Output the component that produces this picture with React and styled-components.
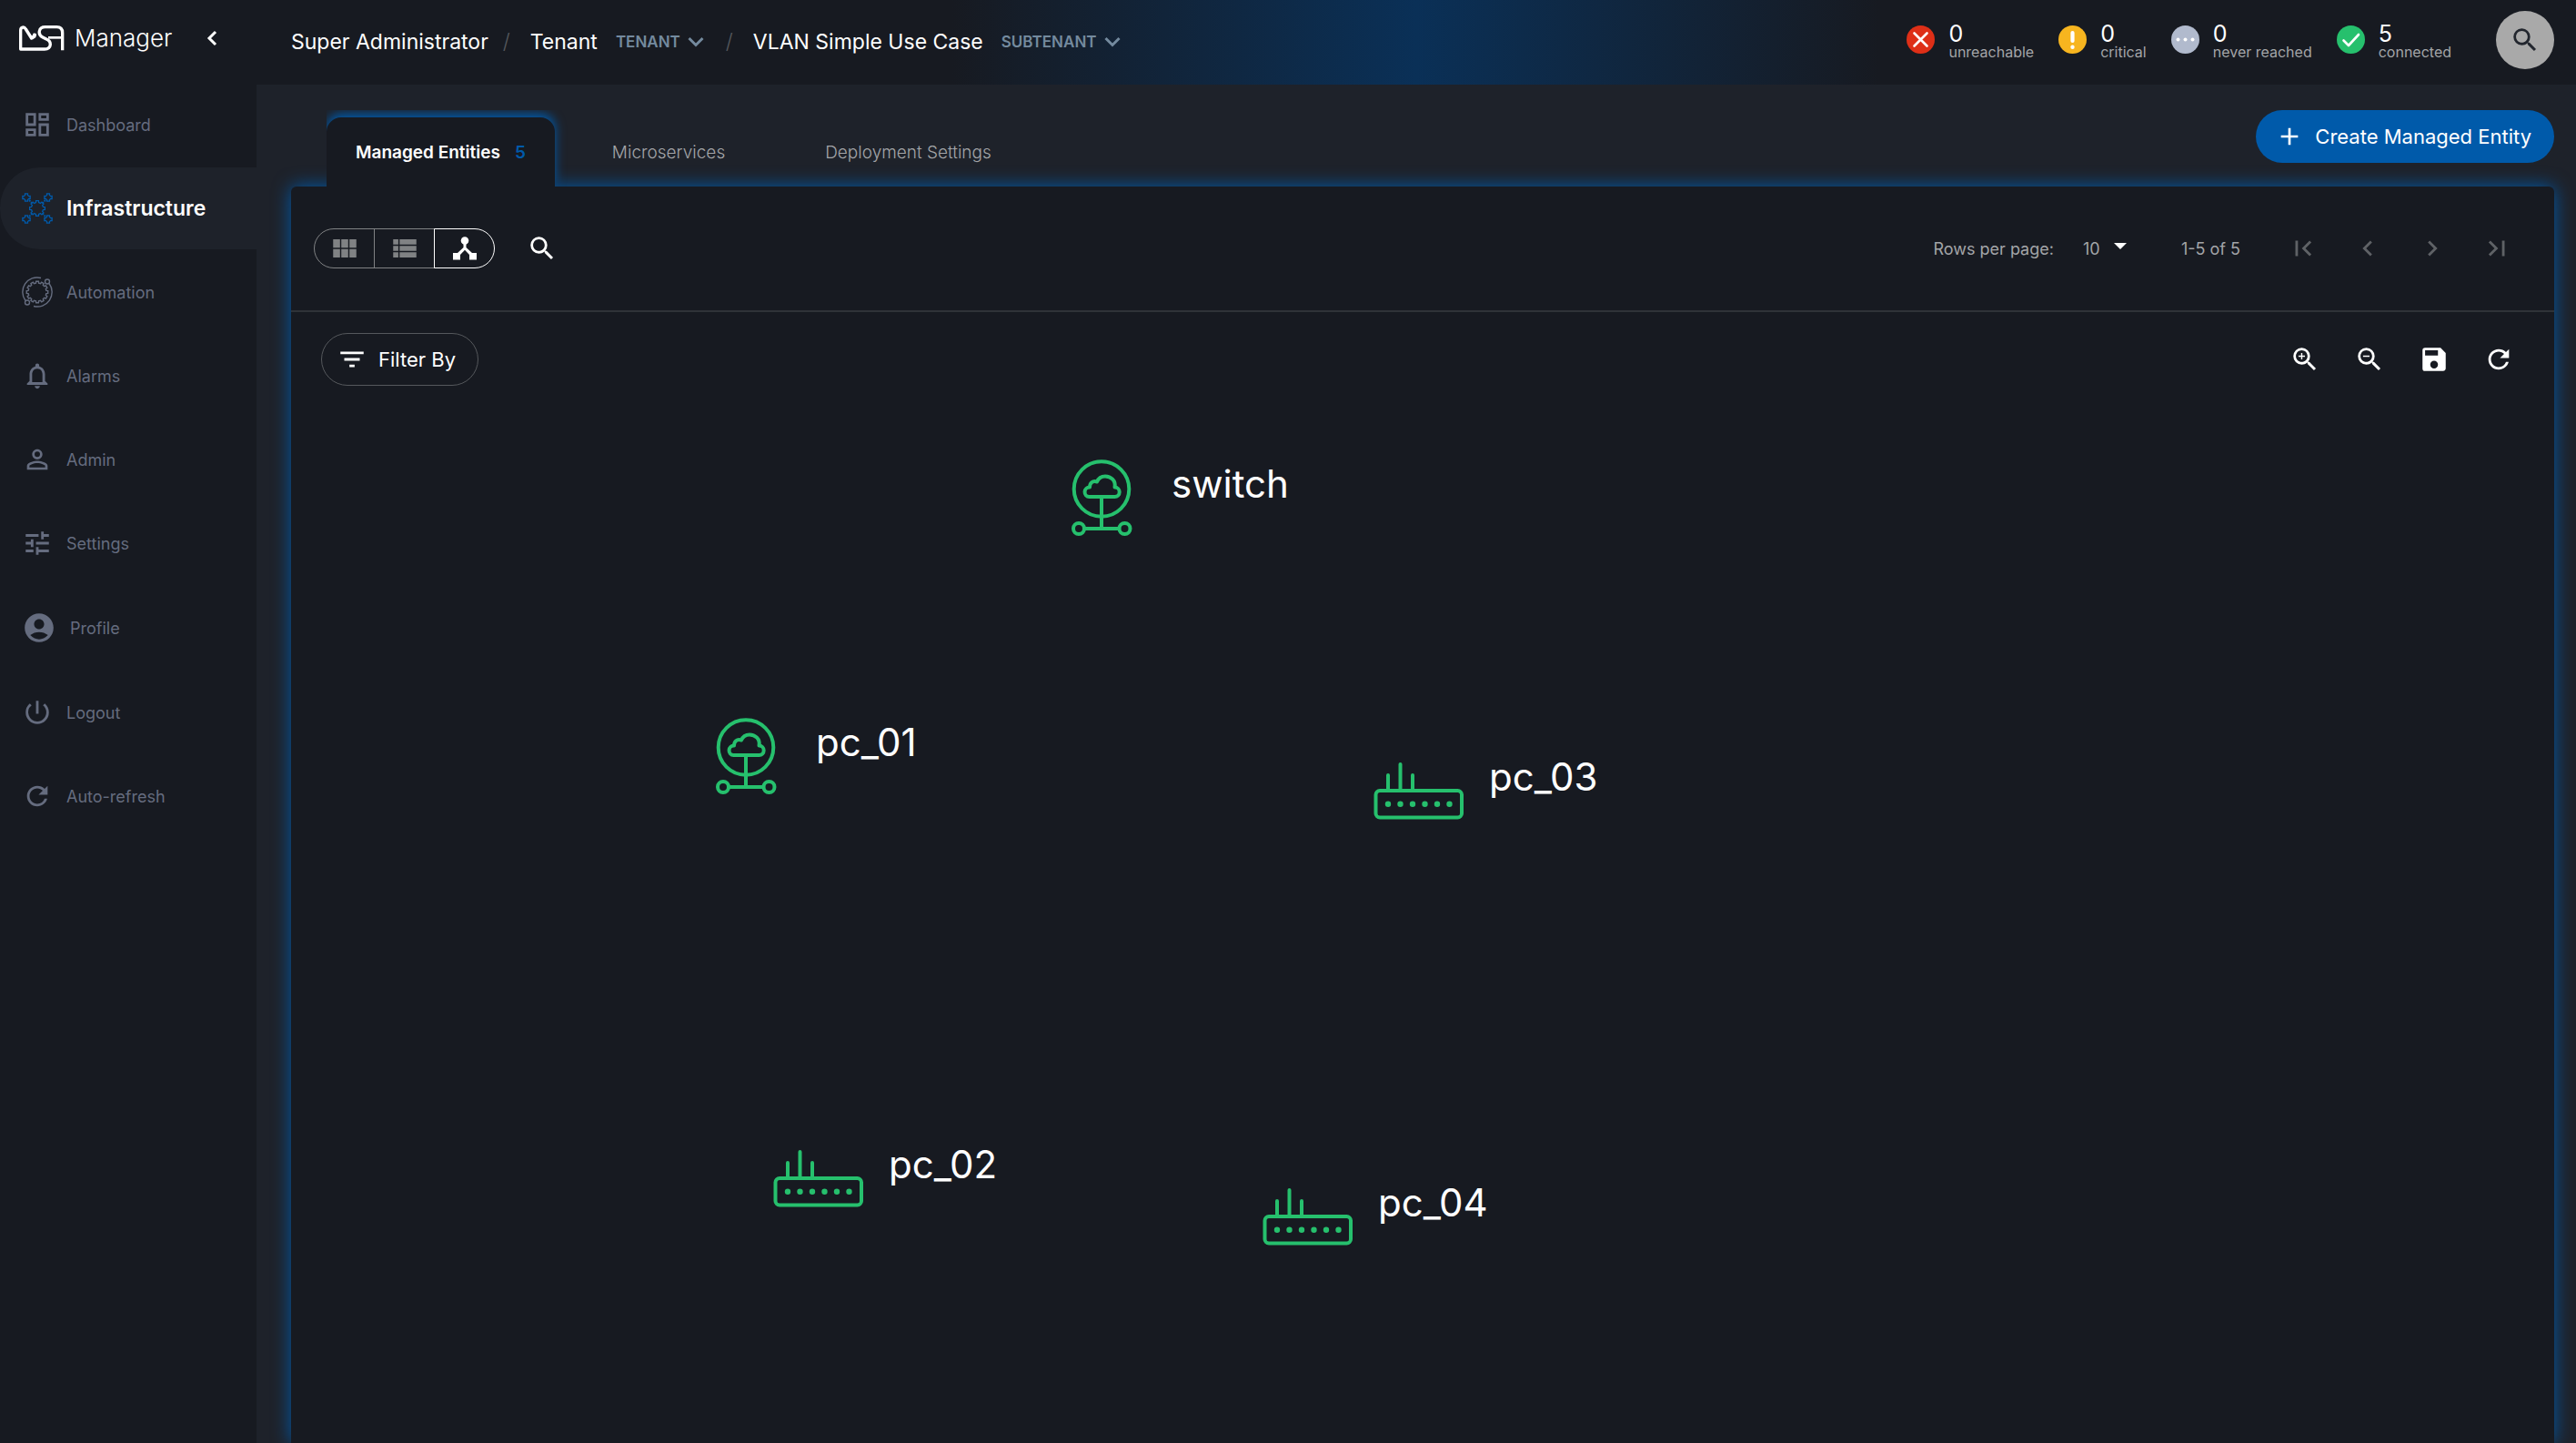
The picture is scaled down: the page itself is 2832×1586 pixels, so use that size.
import React from "react";
import styled, { createGlobalStyle, css } from "styled-components";
import {
  MdOutlineDashboard,
  MdNotificationsNone,
  MdPersonOutline,
  MdTune,
  MdAccountCircle,
  MdPowerSettingsNew,
  MdRefresh,
  MdSearch,
  MdViewModule,
  MdViewList,
  MdZoomIn,
  MdZoomOut,
  MdSave,
  MdFirstPage,
  MdChevronLeft,
  MdChevronRight,
  MdLastPage,
  MdFilterList,
  MdAdd,
} from "react-icons/md";

const color = {
  dark: "#171a21",
  base: "#1e222a",
  blue: "#005aaa",
  green: "#26c06d",
  nav: "#656c7f",
  muted: "#a3a5a8",
  tag: "#748a9e",
  line: "#2f3338",
};

const GlobalStyle = createGlobalStyle`
  *, *::before, *::after { box-sizing: border-box; }
  body {
    margin: 0;
    background: ${color.base};
    color: #fff;
    font-family: Inter, "Liberation Sans", sans-serif;
    font-size: 18px;
  }
  button, select {
    margin: 0;
    padding: 0;
    border: 0;
    background: none;
    color: inherit;
    font: inherit;
    cursor: pointer;
  }
  svg { display: block; flex: none; }
  a { color: inherit; text-decoration: none; }
`;

/* ---------- layout ---------- */

const Shell = styled.div`
  display: grid;
  grid-template-columns: 282px minmax(0, 1fr);
  height: 100vh;
  overflow: hidden;
`;

const Sidebar = styled.aside`
  background: ${color.dark};
`;

const Main = styled.div`
  display: flex;
  flex-direction: column;
  min-width: 0;
`;

const Brand = styled.div`
  display: flex;
  align-items: center;
  height: 92px;
  padding: 0 43px 8px 21px;
`;

const BrandName = styled.span`
  flex: 1;
  margin-left: 11px;
  font-size: 26px;
  font-weight: 300;
  line-height: 32px;
`;

const Nav = styled.nav`
  display: flex;
  flex-direction: column;
  gap: 2px;
`;

const NavItem = styled.a`
  display: flex;
  align-items: center;
  gap: 15px;
  height: ${(p) => (p.$tall ? 92 : 90)}px;
  padding-left: 24px;
  border-radius: 44px 0 0 44px;
  color: ${color.nav};
  font-size: 18px;

  ${(p) =>
    p.$active &&
    css`
      background: ${color.base};
      color: #fff;
      font-size: 23px;
      font-weight: 600;
      svg { color: ${color.blue}; }
    `}
`;

/* ---------- header ---------- */

const Header = styled.header`
  display: flex;
  align-items: center;
  justify-content: space-between;
  height: 93px;
  padding: 0 24px 6px 38px;
  background: linear-gradient(90deg, ${color.dark} 30%, #0a3057 50%, ${color.dark} 70%);
`;

const Crumbs = styled.nav`
  display: flex;
  align-items: center;
  padding-top: 4px;
  font-size: 23px;
`;

const Slash = styled.span`
  margin: 0 22px 0 16px;
  color: #55585d;
  font-weight: 300;
`;

const LevelButton = styled.button`
  display: flex;
  align-items: center;
  gap: 8px;
  margin-left: 20px;
  color: ${color.tag};
  font-size: 17px;
  font-weight: 600;

  & + ${Slash} { margin-left: 24px; }
`;

const Stats = styled.div`
  display: flex;
  align-items: center;
  gap: 27px;
`;

const Stat = styled.div`
  display: flex;
  align-items: center;
  gap: 15px;
`;

const StatText = styled.div`
  display: flex;
  flex-direction: column;
  padding-top: 4px;
`;

const StatValue = styled.span`
  font-size: 25px;
  line-height: 22px;
`;

const StatLabel = styled.span`
  color: ${color.muted};
  font-size: 16px;
  line-height: 18px;
`;

const RoundSearch = styled.button`
  display: grid;
  place-items: center;
  width: 64px;
  height: 64px;
  margin-left: 22px;
  border-radius: 50%;
  background: #a9a9a9;
  color: #22262e;
`;

/* ---------- tabs and panel ---------- */

const TopBar = styled.div`
  display: flex;
  align-items: flex-start;
  justify-content: space-between;
  padding: 28px 24px 0 77px;
  position: relative;
  z-index: 1;
`;

const Tabs = styled.div`
  display: flex;
  gap: 16px;
  padding: 8px 8px 0 0;
  overflow: hidden;
`;

const Tab = styled.button`
  display: flex;
  align-items: center;
  gap: 16px;
  height: 76px;
  padding: 0 47px;
  color: ${color.muted};
  font-size: 19px;
  font-weight: 300;

  ${(p) =>
    p.$active &&
    css`
      padding: 0 32px;
      border-radius: 16px 16px 0 0;
      background: ${color.dark};
      box-shadow: 0 -4px 12px ${color.blue};
      color: #fff;
      font-weight: 600;
    `}
`;

const Count = styled.span`
  color: ${color.blue};
`;

const CreateButton = styled.button`
  display: flex;
  align-items: center;
  gap: 12px;
  height: 58px;
  padding: 0 25px 0 21px;
  border-radius: 29px;
  background: ${color.blue};
  font-size: 22px;
`;

const Panel = styled.section`
  display: flex;
  flex: 1;
  flex-direction: column;
  margin: 0 24px 0 38px;
  border-radius: 6px 6px 0 0;
  background: ${color.dark};
  box-shadow: 0 0 20px ${color.blue};
`;

const Toolbar = styled.div`
  display: flex;
  align-items: center;
  justify-content: space-between;
  height: 138px;
  padding: 0 46px 0 25px;
  border-bottom: 2px solid ${color.line};
`;

const Group = styled.div`
  display: flex;
  align-items: center;
`;

const ViewButton = styled.button`
  display: grid;
  place-items: center;
  width: 67px;
  height: 44px;
  margin-right: -1px;
  border: 1px solid #808284;
  color: #808284;

  &:first-child { border-radius: 22px 0 0 22px; }
  &:last-of-type { border-radius: 0 22px 22px 0; }

  ${(p) =>
    p.$active &&
    css`
      border-color: #fff;
      color: #fff;
      z-index: 1;
    `}
`;

const IconButton = styled.button`
  display: grid;
  place-items: center;
  color: ${(p) => (p.disabled ? "#5f6266" : "#fff")};
`;

const SearchSlot = styled.div`
  margin-left: 36px;
`;

const IconRow = styled.div`
  display: flex;
  align-items: center;
  gap: 37px;
`;

const Paging = styled.div`
  display: flex;
  align-items: center;
  color: ${color.muted};
  font-size: 18px;
`;

const SelectWrap = styled.div`
  display: flex;
  align-items: center;
  margin: 0 60px 0 32px;
`;

const RowsSelect = styled.select`
  appearance: none;
  width: 48px;
  background: url("data:image/svg+xml,%3Csvg xmlns='http://www.w3.org/2000/svg' width='14' height='7'%3E%3Cpath d='M0 0h14L7 7z' fill='white'/%3E%3C/svg%3E")
    no-repeat right 35%;
`;

const Range = styled.span`
  margin-right: 52px;
`;

const Canvas = styled.div`
  position: relative;
  flex: 1;
`;

const CanvasBar = styled.div`
  display: flex;
  align-items: center;
  justify-content: space-between;
  padding: 23px 44px 0 33px;
`;

const FilterButton = styled.button`
  display: flex;
  align-items: center;
  gap: 12px;
  height: 58px;
  padding: 0 24px 0 16px;
  border: 1px solid #55585c;
  border-radius: 29px;
  font-size: 22px;
`;

const Node = styled.div`
  position: absolute;
  left: ${(p) => p.$x}px;
  top: ${(p) => p.$y}px;
  display: flex;
  align-items: center;
  gap: 27px;
`;

const NodeLabel = styled.span`
  padding-bottom: 30px;
  font-size: 42px;
  line-height: 48px;
`;

/* ---------- drawings ---------- */

function gear(cx, cy, outer, inner, teeth) {
  const points = [];
  const step = (Math.PI * 2) / teeth;
  for (let i = 0; i < teeth; i += 1) {
    const a = i * step - Math.PI / 2;
    [
      [-0.22, outer],
      [0.22, outer],
      [0.3, inner],
      [0.7, inner],
    ].forEach(([t, r]) => {
      points.push(
        `${(cx + r * Math.cos(a + t * step)).toFixed(2)} ${(cy + r * Math.sin(a + t * step)).toFixed(2)}`
      );
    });
  }
  return `M${points.join("L")}Z`;
}

const Logo = () => (
  <svg width="50" height="28" viewBox="0 0 150 84" fill="none" stroke="#fff" strokeWidth="10" strokeLinejoin="round" aria-hidden="true">
    <path d="M51 26V36L41 42L22 12C17 3 5 4 5 16V78H84C108 78 108 52 90 45L78 39C60 30 64 5 86 5H124C138 5 143 12 143 24V82" />
    <path d="M42 43L54 28" />
    <path d="M96 40H143" strokeWidth="8" />
  </svg>
);

const CollapseIcon = () => (
  <svg width="12" height="18" viewBox="0 0 12 18" fill="none" stroke="#fff" strokeWidth="3" aria-hidden="true">
    <path d="M10 2L3 9l7 7" />
  </svg>
);

const Caret = () => (
  <svg width="18" height="12" viewBox="0 0 18 12" fill="none" stroke="currentColor" strokeWidth="3" aria-hidden="true">
    <path d="M1.500 2L9 9.500L16.500 2" />
  </svg>
);

const InfrastructureIcon = () => (
  <svg width="34" height="34" viewBox="0 0 34 34" fill="none" stroke="currentColor" strokeWidth="1.300" aria-hidden="true">
    <path d={gear(17, 17, 8.5, 6.6, 8)} />
    {[
      [5, 5],
      [29, 5],
      [5, 29],
      [29, 29],
    ].map(([x, y]) => (
      <path key={`${x}-${y}`} d={gear(x, y, 4.4, 3, 4)} />
    ))}
    <path d="M8 8l3.500 3.500M26 8l-3.500 3.500M8 26l3.500-3.500M26 26l-3.500-3.500" strokeWidth="1.800" strokeDasharray="2 1" />
  </svg>
);

const AutomationIcon = () => (
  <svg width="34" height="34" viewBox="0 0 34 34" fill="none" stroke="currentColor" strokeWidth="1.400" aria-hidden="true">
    <path d={gear(17, 17, 11.8, 10, 12)} />
    <path d="M21 1.500A16 16 0 0 0 4 26.500M30 7.500A16 16 0 0 1 13 32.500" />
    <circle cx="28" cy="5.500" r="2.500" />
    <circle cx="6" cy="28.500" r="2.500" />
  </svg>
);

const TopologyIcon = () => (
  <svg width="26" height="26" viewBox="0 0 26 26" fill="#fff" aria-hidden="true">
    <circle cx="13" cy="4.500" r="4.300" />
    <path d="M0 18h5l6.500-6V7h3v5l6.500 6h5v7.500h-8v-5.500L13 14.800L8 20v5.500H0z" />
  </svg>
);

const statDrawing = {
  unreachable: <path d="M8.500 8.500l14 14M22.500 8.500l-14 14" strokeWidth="2.600" />,
  critical: (
    <>
      <path d="M15.500 8v9" strokeWidth="4.200" />
      <circle cx="15.500" cy="23.700" r="2.200" fill="#fff" stroke="none" />
    </>
  ),
  never: (
    <g fill="#fff" stroke="none">
      <circle cx="7.500" cy="15.500" r="2" />
      <circle cx="15.500" cy="15.500" r="2" />
      <circle cx="23.500" cy="15.500" r="2" />
    </g>
  ),
  connected: <path d="M7.500 16.500l5.500 5.500L24 10" strokeWidth="2.600" />,
};

const StatIcon = ({ kind, fill }) => (
  <svg width="31" height="31" viewBox="0 0 31 31" fill="none" stroke="#fff" strokeLinecap="round" strokeLinejoin="round" aria-hidden="true">
    <circle cx="15.500" cy="15.500" r="15.500" fill={fill} stroke="none" />
    {statDrawing[kind]}
  </svg>
);

const CloudNodeIcon = () => (
  <svg width="100" height="84" viewBox="0 0 100 84" fill="none" stroke={color.green} strokeWidth="4" aria-hidden="true">
    <circle cx="50" cy="32.500" r="30.300" />
    <path d="M36.500 41H64.500a5.200 5.200 0 0 0 0-10.400C66 23 60 18.500 54 18.500C49.500 18.500 46.500 21 45 24.500C40 23 37 26 37 30.600a5.200 5.200 0 0 0-.5 10.400Z" strokeLinejoin="round" />
    <path d="M50 42V76" />
    <circle cx="25" cy="76" r="6" />
    <circle cx="75.500" cy="76" r="6" />
    <path d="M31 76H70" />
  </svg>
);

const RouterNodeIcon = () => (
  <svg width="100" height="84" viewBox="0 0 100 84" fill="none" stroke={color.green} strokeWidth="4" strokeLinecap="round" aria-hidden="true">
    <rect x="2.500" y="42" width="94.500" height="29.500" rx="4.500" />
    <path d="M16 41V25M29.500 41V13M43 41V25" />
    <g fill={color.green} stroke="none">
      {[16, 29.5, 43, 56.5, 70, 83.5].map((x) => (
        <circle key={x} cx={x} cy="56.800" r="3.200" />
      ))}
    </g>
  </svg>
);

/* ---------- data ---------- */

const navItems = [
  { label: "Dashboard", icon: <MdOutlineDashboard size={34} /> },
  { label: "Infrastructure", icon: <InfrastructureIcon />, active: true },
  { label: "Automation", icon: <AutomationIcon /> },
  { label: "Alarms", icon: <MdNotificationsNone size={34} /> },
  { label: "Admin", icon: <MdPersonOutline size={34} /> },
  { label: "Settings", icon: <MdTune size={34} /> },
  { label: "Profile", icon: <MdAccountCircle size={38} />, tall: true },
  { label: "Logout", icon: <MdPowerSettingsNew size={34} /> },
  { label: "Auto-refresh", icon: <MdRefresh size={34} /> },
];

const stats = [
  { kind: "unreachable", value: 0, label: "unreachable", fill: "#de2f17" },
  { kind: "critical", value: 0, label: "critical", fill: "#f7b51f" },
  { kind: "never", value: 0, label: "never reached", fill: "#b1bacd" },
  { kind: "connected", value: 5, label: "connected", fill: color.green },
];

const nodes = [
  { label: "switch", icon: CloudNodeIcon, x: 841, y: 162 },
  { label: "pc_01", icon: CloudNodeIcon, x: 450, y: 446 },
  { label: "pc_03", icon: RouterNodeIcon, x: 1190, y: 484 },
  { label: "pc_02", icon: RouterNodeIcon, x: 530, y: 910 },
  { label: "pc_04", icon: RouterNodeIcon, x: 1068, y: 952 },
];

export default function App() {
  return (
    <>
      <GlobalStyle />
      <Shell>
        <Sidebar>
          <Brand>
            <Logo />
            <BrandName>Manager</BrandName>
            <button type="button" aria-label="Collapse menu">
              <CollapseIcon />
            </button>
          </Brand>
          <Nav>
            {navItems.map((item) => (
              <NavItem key={item.label} href="#" $active={item.active} $tall={item.tall}>
                {item.icon}
                {item.label}
              </NavItem>
            ))}
          </Nav>
        </Sidebar>

        <Main>
          <Header>
            <Crumbs>
              <a href="#">Super Administrator</a>
              <Slash>/</Slash>
              <a href="#">Tenant</a>
              <LevelButton type="button">
                TENANT
                <Caret />
              </LevelButton>
              <Slash>/</Slash>
              <a href="#">VLAN Simple Use Case</a>
              <LevelButton type="button">
                SUBTENANT
                <Caret />
              </LevelButton>
            </Crumbs>
            <Stats>
              {stats.map((s) => (
                <Stat key={s.kind}>
                  <StatIcon kind={s.kind} fill={s.fill} />
                  <StatText>
                    <StatValue>{s.value}</StatValue>
                    <StatLabel>{s.label}</StatLabel>
                  </StatText>
                </Stat>
              ))}
              <RoundSearch type="button" aria-label="Search">
                <MdSearch size={34} />
              </RoundSearch>
            </Stats>
          </Header>

          <TopBar>
            <Tabs role="tablist">
              <Tab type="button" role="tab" aria-selected="true" $active>
                Managed Entities <Count>5</Count>
              </Tab>
              <Tab type="button" role="tab" aria-selected="false">
                Microservices
              </Tab>
              <Tab type="button" role="tab" aria-selected="false">
                Deployment Settings
              </Tab>
            </Tabs>
            <CreateButton type="button">
              <MdAdd size={32} />
              Create Managed Entity
            </CreateButton>
          </TopBar>

          <Panel>
            <Toolbar>
              <Group>
                <Group>
                  <ViewButton type="button" aria-label="Grid view">
                    <MdViewModule size={34} />
                  </ViewButton>
                  <ViewButton type="button" aria-label="List view">
                    <MdViewList size={34} />
                  </ViewButton>
                  <ViewButton type="button" aria-label="Topology view" $active>
                    <TopologyIcon />
                  </ViewButton>
                </Group>
                <SearchSlot>
                  <IconButton type="button" aria-label="Search entities">
                    <MdSearch size={34} />
                  </IconButton>
                </SearchSlot>
              </Group>
              <Paging>
                <label htmlFor="rows">Rows per page:</label>
                <SelectWrap>
                  <RowsSelect id="rows" defaultValue="10">
                    <option value="10">10</option>
                    <option value="20">20</option>
                    <option value="50">50</option>
                  </RowsSelect>
                </SelectWrap>
                <Range>1-5 of 5</Range>
                <IconRow>
                  <IconButton type="button" aria-label="First page" disabled>
                    <MdFirstPage size={34} />
                  </IconButton>
                  <IconButton type="button" aria-label="Previous page" disabled>
                    <MdChevronLeft size={34} />
                  </IconButton>
                  <IconButton type="button" aria-label="Next page" disabled>
                    <MdChevronRight size={34} />
                  </IconButton>
                  <IconButton type="button" aria-label="Last page" disabled>
                    <MdLastPage size={34} />
                  </IconButton>
                </IconRow>
              </Paging>
            </Toolbar>

            <Canvas>
              <CanvasBar>
                <FilterButton type="button">
                  <MdFilterList size={34} />
                  Filter By
                </FilterButton>
                <IconRow>
                  <IconButton type="button" aria-label="Zoom in">
                    <MdZoomIn size={34} />
                  </IconButton>
                  <IconButton type="button" aria-label="Zoom out">
                    <MdZoomOut size={34} />
                  </IconButton>
                  <IconButton type="button" aria-label="Save layout">
                    <MdSave size={34} />
                  </IconButton>
                  <IconButton type="button" aria-label="Refresh">
                    <MdRefresh size={34} />
                  </IconButton>
                </IconRow>
              </CanvasBar>
              {nodes.map(({ label, icon: Icon, x, y }) => (
                <Node key={label} $x={x} $y={y}>
                  <Icon />
                  <NodeLabel>{label}</NodeLabel>
                </Node>
              ))}
            </Canvas>
          </Panel>
        </Main>
      </Shell>
    </>
  );
}
